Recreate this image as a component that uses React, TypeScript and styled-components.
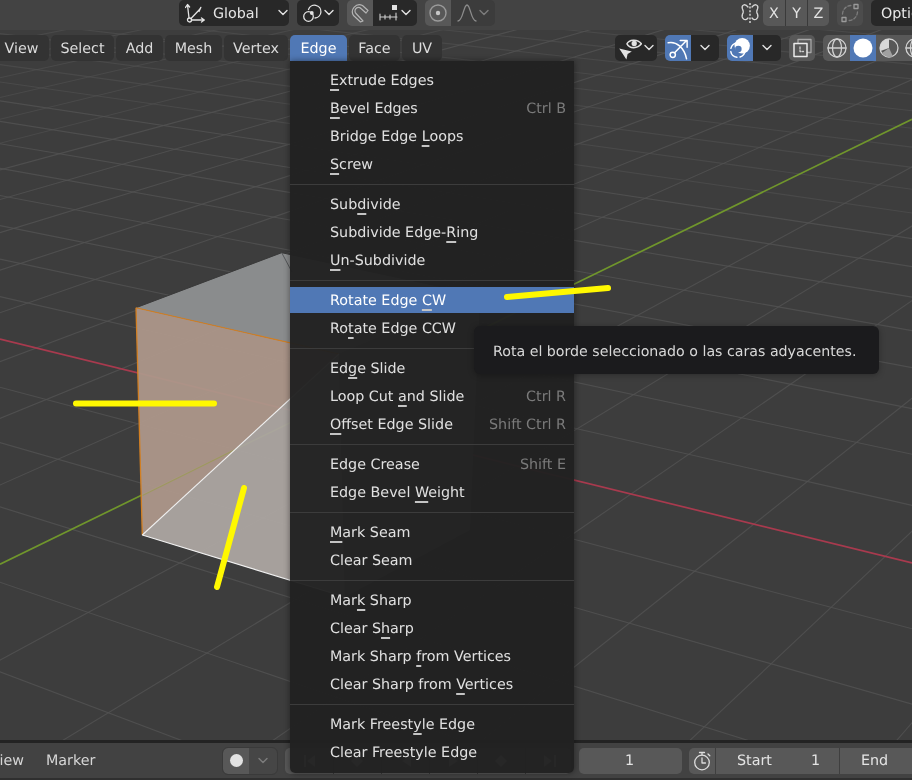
import React from 'react'
import styled, { createGlobalStyle } from 'styled-components'

const GlobalStyle = createGlobalStyle`
  html, body {
    margin: 0;
    padding: 0;
    background: #3d3d3d;
    overflow: hidden;
  }
`

// viewport perspective: two vanishing points, measured off the axes
const ORIGIN = { x: 307, y: 414.4 }
const V1 = { x: -2520, y: -280 }
const V2 = { x: 1820, y: -324 }

const redY = (x: number) => 339 + 0.2456 * x
const greenY = (x: number) => 564.3 - 0.488 * x

const alongRed = (k: number) => {
  const x = ORIGIN.x + (98.3 * k) / (1 - 0.03 * k)
  return { x, y: redY(x) }
}

const alongGreen = (m: number) => {
  const x = ORIGIN.x + (69 * m) / (1 + 0.04 * m)
  return { x, y: greenY(x) }
}

const through = (v: { x: number; y: number }, p: { x: number; y: number }) => ({
  x1: v.x,
  y1: v.y,
  x2: v.x + (p.x - v.x) * 4,
  y2: v.y + (p.y - v.y) * 4,
})

const range = (from: number, to: number) => {
  const out: number[] = []
  for (let i = from; i <= to; i++) if (i !== 0) out.push(i)
  return out
}

const Viewport3D = () => (
  <SceneSvg viewBox="0 30 912 710">
    <g stroke="#525252" strokeWidth="1.1">
      {range(-34, 9).map((k) => (
        <line key={k} {...through(V2, alongRed(k))} opacity={k < -8 ? 0.6 : 0.85} />
      ))}
      {range(-9, 30).map((m) => (
        <line key={m} {...through(V1, alongGreen(m))} opacity={m > 8 ? 0.6 : 0.85} />
      ))}
    </g>
    <line x1="0" y1={redY(0)} x2="912" y2={redY(912)} stroke="#a83a4e" strokeWidth="1.7" />
    <line x1="0" y1={greenY(0)} x2="912" y2={greenY(912)} stroke="#70962c" strokeWidth="1.7" />

    <polygon points="136,307.7 281.7,252.7 480,295 339,354" fill="#8c8e90" fillOpacity="0.97" />
    <polygon points="339,354 480,295 470,530 345,597" fill="#77787a" fillOpacity="0.97" />
    <polygon points="136,307.7 142.3,535 339,354" fill="#ad978a" fillOpacity="0.95" />
    <polygon points="142.3,535 339,354 345,597" fill="#aca5a1" fillOpacity="0.95" />
    <line x1="142.5" y1="495.5" x2="234.8" y2="449.7" stroke="#9d9860" strokeWidth="1.2" />

    <line x1="136" y1="307.7" x2="281.7" y2="252.7" stroke="#3a3a3a" strokeWidth="1" />
    <line x1="281.7" y1="252.7" x2="292" y2="272" stroke="#55575a" strokeWidth="1" />
    <line x1="281.7" y1="252.7" x2="480" y2="295" stroke="#3a3a3a" strokeWidth="1" />
    <line x1="136" y1="307.7" x2="142.3" y2="535" stroke="#d27f22" strokeWidth="1.3" />
    <line x1="136" y1="307.7" x2="339" y2="354" stroke="#d27f22" strokeWidth="1.1" />
    <line x1="142.3" y1="535" x2="339" y2="354" stroke="#f2f2f2" strokeWidth="1.1" />
    <line x1="142.3" y1="535" x2="345" y2="597" stroke="#f2f2f2" strokeWidth="1.1" />
  </SceneSvg>
)

const Chevron = ({ dim }: { dim?: boolean }) => (
  <svg width="12" height="8" viewBox="0 0 12 8" fill="none">
    <polyline
      points="2,1.5 6,5.5 10,1.5"
      stroke={dim ? '#7c7c7c' : '#e2e2e2'}
      strokeWidth="1.4"
      strokeLinecap="round"
      strokeLinejoin="round"
    />
  </svg>
)

const Icon = ({ size = 20, children }: { size?: number; children: React.ReactNode }) => (
  <svg
    width={size}
    height={size}
    viewBox="0 0 20 20"
    fill="none"
    stroke="#e2e2e2"
    strokeWidth="1.3"
    strokeLinecap="round"
    strokeLinejoin="round"
  >
    {children}
  </svg>
)

const OrientationIcon = () => (
  <Icon>
    <circle cx="4.5" cy="17" r="2" />
    <path d="M4 15 2.5 2 M0.5 4.5 2.5 1.5 4.6 4 M6.5 17H19 M16.5 15l2.8 2-2.8 2 M6 15.5 15 6" />
    <path d="M14 8.5 16 4" strokeDasharray="1.5 1.5" />
  </Icon>
)

const LinkIcon = () => (
  <Icon>
    <circle cx="6.5" cy="13.5" r="4.8" />
    <path d="M6.5 6.5a6.4 6.4 0 1 1 6.5 8.5" />
    <circle cx="9.8" cy="10" r="1.9" fill="#e2e2e2" stroke="none" />
  </Icon>
)

const MagnetIcon = () => (
  <Icon>
    <path
      d="M13 18 6 10.5a3.5 3.5 0 0 1 5-5l5 4.5 2-2.5-5.5-5A7 7 0 0 0 3.5 12.5L10.5 19Z"
      stroke="#b4b4b4"
      strokeWidth="1.2"
    />
  </Icon>
)

const SnapIncrementIcon = () => (
  <Icon>
    <rect x="13" y="2" width="5" height="5" fill="#e2e2e2" stroke="none" />
    <path d="M1 14H18 M1 11v6 M6 12v4 M11 12v4 M17 10v7" stroke="#cfcfcf" strokeWidth="1.1" />
  </Icon>
)

const ProportionalIcon = () => (
  <Icon>
    <circle cx="10" cy="10" r="8" stroke="#9a9a9a" strokeWidth="1.4" />
    <circle cx="10" cy="10" r="2.2" fill="#c6c6c6" stroke="none" />
  </Icon>
)

const FalloffIcon = () => (
  <Icon>
    <path d="M1 18C6 18 6.5 2 10 2s4 16 9 16" stroke="#8c8c8c" />
  </Icon>
)

const MirrorIcon = () => (
  <Icon>
    <path d="M8 4C5 0 1 2 2.5 6 3.5 8 4 9 2.5 11 1 15 5 19 8 15" stroke="#d6d6d6" />
    <path d="M12 4c3-4 7-2 5.5 2-1 2-1.5 3 0 5 1.5 4-2.5 8-5.5 4" stroke="#d6d6d6" />
    <path d="M10 0v20" stroke="#e8e8e8" strokeDasharray="2 1.6" strokeLinecap="butt" />
  </Icon>
)

const AutoMergeIcon = () => (
  <Icon>
    <rect x="14" y="1.5" width="4" height="4" stroke="#9a9a9a" />
    <rect x="2" y="14.5" width="4" height="4" stroke="#9a9a9a" />
    <path d="M2.5 11C3 6 6 3 11 2.5 M17.5 9C17 14 14 17 9 17.5" stroke="#7c7c7c" strokeDasharray="3 2" />
  </Icon>
)

const VisibilityIcon = () => (
  <Icon size={24}>
    <path d="M7.5 6.5C9 3 16 2 19.5 6.5 16 11 9.5 10.5 7.5 6.5Z" />
    <circle cx="13.5" cy="6.2" r="2.2" fill="#e2e2e2" stroke="none" />
    <path d="M1 10.5 11.5 13 8 15 7 19.5Z" fill="#e2e2e2" stroke="none" />
  </Icon>
)

const GizmoIcon = () => (
  <Icon size={23}>
    <circle cx="5" cy="15.5" r="2.3" stroke="#fff" />
    <path d="M6.8 13.5 17 3 M11.5 3H17.5V9 M1 5C8 3.5 15 9 17 19" stroke="#fff" />
  </Icon>
)

const OverlayIcon = () => (
  <Icon size={22}>
    <circle cx="8" cy="12" r="6.5" stroke="#fff" strokeDasharray="8 3" />
    <circle cx="12" cy="8" r="7" fill="#fff" stroke="none" />
    <circle cx="8.5" cy="11" r="3" fill="#5078b5" stroke="none" />
  </Icon>
)

const XrayIcon = () => (
  <Icon>
    <rect x="6" y="1.5" width="13" height="13" stroke="#a8a8a8" />
    <rect x="2" y="5.5" width="13" height="13" fill="#585858" stroke="#eaeaea" strokeWidth="1.5" />
    <path d="M8 9v4.5h3.5" stroke="#cfcfcf" strokeDasharray="2 1.5" />
  </Icon>
)

const WireIcon = () => (
  <Icon>
    <circle cx="10" cy="10" r="9" stroke="#d0d0d0" />
    <ellipse cx="10" cy="10" rx="4.5" ry="9" stroke="#d0d0d0" />
    <path d="M1 10H19" stroke="#d0d0d0" />
  </Icon>
)

const SolidIcon = () => (
  <Icon>
    <circle cx="10" cy="10" r="9.5" fill="#ffffff" stroke="none" />
  </Icon>
)

const MaterialIcon = () => (
  <Icon>
    <circle cx="10" cy="10" r="9" stroke="#d0d0d0" />
    <path d="M10 1a9 9 0 0 0-8.5 12L10 10Z" fill="#d8d8d8" stroke="none" />
    <path d="M3 15a9 9 0 0 0 11 3.5L10 10Z" fill="#a0a0a0" stroke="none" />
  </Icon>
)

const TimerIcon = () => (
  <Icon>
    <circle cx="10" cy="11.5" r="7.3" stroke="#dcdcdc" />
    <path d="M7.5 1.5h5 M10 2v2 M16 3l1.8 1.8 M10 7v5h3.5" stroke="#dcdcdc" />
  </Icon>
)

const PlayShape = ({ d }: { d: string }) => (
  <svg width="16" height="14" viewBox="0 0 16 14">
    <path d={d} fill="#b8b8b8" />
  </svg>
)

const PLAYBACK = [
  'M3 1h2v12H3Z M14 1v12L6 7Z',
  'M1 7l6-6 6 6-6 6Z',
  'M13 1v12L4 7Z',
  'M3 1v12l9-6Z',
  'M1 7l6-6 6 6-6 6Z',
  'M12 1h2v12h-2Z M2 1v12l8-6Z',
]

type Entry = { label: string; shortcut?: string; active?: boolean } | 'sep'

// an underscore marks the mnemonic letter
const MENU: Entry[] = [
  { label: '_Extrude Edges' },
  { label: '_Bevel Edges', shortcut: 'Ctrl B' },
  { label: 'Bridge Edge _Loops' },
  { label: '_Screw' },
  'sep',
  { label: 'Sub_divide' },
  { label: 'Subdivide Edge-_Ring' },
  { label: '_Un-Subdivide' },
  'sep',
  { label: 'Rotate Edge _CW', active: true },
  { label: 'Ro_tate Edge CCW' },
  'sep',
  { label: 'Ed_ge Slide' },
  { label: 'Loop Cut _and Slide', shortcut: 'Ctrl R' },
  { label: '_Offset Edge Slide', shortcut: 'Shift Ctrl R' },
  'sep',
  { label: 'Edge Crease', shortcut: 'Shift E' },
  { label: 'Edge Bevel _Weight' },
  'sep',
  { label: '_Mark Seam' },
  { label: 'Clear Seam' },
  'sep',
  { label: 'Mar_k Sharp' },
  { label: 'Clear S_harp' },
  { label: 'Mark Sharp _from Vertices' },
  { label: 'Clear Sharp from _Vertices' },
  'sep',
  { label: 'Mark Freest_yle Edge' },
  { label: 'Clear Freestyle Edge' },
]

const Label = ({ text }: { text: string }) => {
  const at = text.indexOf('_')
  if (at < 0) return <span>{text}</span>
  return (
    <span>
      {text.slice(0, at)}
      <Mnemonic>{text[at + 1]}</Mnemonic>
      {text.slice(at + 2)}
    </span>
  )
}

const MENU_TABS = [
  { name: 'View', w: 55 },
  { name: 'Select', w: 63 },
  { name: 'Add', w: 47 },
  { name: 'Mesh', w: 57 },
  { name: 'Vertex', w: 64 },
  { name: 'Edge', w: 57, open: true },
  { name: 'Face', w: 51 },
  { name: 'UV', w: 40 },
]

export default function App() {
  return (
    <Page>
      <GlobalStyle />
      <ToolHeader>
        <Group>
          <Btn $w={110} $pad>
            <OrientationIcon />
            <DropLabel>Global</DropLabel>
            <Chevron />
          </Btn>
        </Group>
        <Group>
          <Btn $w={42}>
            <LinkIcon />
            <Chevron />
          </Btn>
        </Group>
        <Group>
          <Btn $w={26} $tone="mid">
            <MagnetIcon />
          </Btn>
          <Btn $w={44}>
            <SnapIncrementIcon />
            <Chevron />
          </Btn>
        </Group>
        <Group>
          <Btn $w={26} $tone="mid">
            <ProportionalIcon />
          </Btn>
          <Btn $w={44} $tone="off">
            <FalloffIcon />
            <Chevron dim />
          </Btn>
        </Group>
        <MirrorSlot>
          <MirrorIcon />
        </MirrorSlot>
        <Group>
          <AxisBtn $w={22} $tone="mid">X</AxisBtn>
          <AxisBtn $w={22} $tone="mid" $divider>Y</AxisBtn>
          <AxisBtn $w={22} $tone="mid" $divider>Z</AxisBtn>
        </Group>
        <Group>
          <Btn $w={26} $tone="dim">
            <AutoMergeIcon />
          </Btn>
        </Group>
        <OptionsButton>Options</OptionsButton>
      </ToolHeader>

      <Viewport>
        <Viewport3D />
        <MenuRow>
          <Tabs>
            {MENU_TABS.map((tab) => (
              <Tab key={tab.name} $w={tab.w} $open={tab.open}>
                {tab.name}
              </Tab>
            ))}
          </Tabs>
          <ViewControls>
            <Group>
              <Btn $w={42}>
                <VisibilityIcon />
                <Chevron />
              </Btn>
            </Group>
            <Group>
              <Btn $w={26} $tone="blue">
                <GizmoIcon />
              </Btn>
              <Btn $w={28}>
                <Chevron />
              </Btn>
            </Group>
            <Group>
              <Btn $w={26} $tone="blue">
                <OverlayIcon />
              </Btn>
              <Btn $w={28}>
                <Chevron />
              </Btn>
            </Group>
            <Group>
              <Btn $w={26} $tone="mid">
                <XrayIcon />
              </Btn>
            </Group>
            <Group>
              <Btn $w={27} $tone="mid">
                <WireIcon />
              </Btn>
              <Btn $w={26} $tone="blue">
                <SolidIcon />
              </Btn>
              <Btn $w={26} $tone="mid">
                <MaterialIcon />
              </Btn>
              <Btn $w={26} $tone="mid">
                <WireIcon />
              </Btn>
            </Group>
          </ViewControls>
        </MenuRow>
      </Viewport>

      <Timeline>
        <TimelineMenus>
          <ClippedMenu>View</ClippedMenu>
          <span>Marker</span>
        </TimelineMenus>
        <RecordGroup>
          <Btn $w={26} $tone="mid">
            <RecordDot />
          </Btn>
          <Btn $w={28} $tone="plain">
            <Chevron dim />
          </Btn>
        </RecordGroup>
        <PlaybackGroup>
          {PLAYBACK.map((d, i) => (
            <Btn key={i} $w={48} $tone="mid" $divider={i > 0}>
              <PlayShape d={d} />
            </Btn>
          ))}
        </PlaybackGroup>
        <FrameField>1</FrameField>
        <RangeGroup>
          <Btn $w={26} $tone="mid">
            <TimerIcon />
          </Btn>
          <RangeField $w={124}>
            <span>Start</span>
            <span>1</span>
          </RangeField>
          <RangeField $w={100}>
            <span>End</span>
          </RangeField>
        </RangeGroup>
      </Timeline>

      <Menu>
        {MENU.map((entry, i) =>
          entry === 'sep' ? (
            <Separator key={i} />
          ) : (
            <MenuItem key={i} $active={entry.active}>
              <Label text={entry.label} />
              {entry.shortcut && <Shortcut>{entry.shortcut}</Shortcut>}
            </MenuItem>
          )
        )}
      </Menu>

      <Tooltip>Rota el borde seleccionado o las caras adyacentes.</Tooltip>

      <Annotations viewBox="0 0 912 780">
        <g stroke="#fff800" strokeWidth="6" strokeLinecap="round">
          <line x1="76" y1="403.5" x2="214" y2="403.5" />
          <line x1="244" y1="488" x2="217" y2="587" />
          <line x1="507" y1="297" x2="608" y2="288" />
        </g>
      </Annotations>
    </Page>
  )
}

const UI_FONT = `"DejaVu Sans", "Noto Sans", sans-serif`

const TONES: Record<string, string> = {
  dark: '#282828',
  mid: '#585858',
  blue: '#5078b5',
  dim: '#4c4c4c',
  off: '#3c3c3c',
  plain: '#464646',
}

// the reference is a slightly soft, upscaled capture
const Page = styled.div`
  position: relative;
  width: 912px;
  height: 780px;
  overflow: hidden;
  display: flex;
  flex-direction: column;
  font-family: ${UI_FONT};
  font-size: 14.3px;
  text-rendering: geometricPrecision;
  color: #dcdcdc;
  filter: blur(0.35px);
`

const ToolHeader = styled.div`
  height: 30px;
  flex-shrink: 0;
  display: flex;
  gap: 8px;
  align-items: flex-start;
  padding-left: 179px;
  background: #434343;
  overflow: hidden;
`

const Group = styled.div`
  display: flex;
  flex-shrink: 0;
  border-radius: 5px;
  overflow: hidden;
`

const Btn = styled.div<{ $w: number; $tone?: string; $pad?: boolean; $divider?: boolean }>`
  width: ${(p) => p.$w}px;
  height: 26px;
  flex-shrink: 0;
  box-sizing: border-box;
  display: flex;
  align-items: center;
  justify-content: ${(p) => (p.$pad ? 'flex-start' : 'center')};
  padding: ${(p) => (p.$pad ? '0 0 0 6px' : '0')};
  gap: 1px;
  background: ${(p) => TONES[p.$tone ?? 'dark']};
  border-left: ${(p) => (p.$divider ? '1px solid #3a3a3a' : 'none')};
  color: #e4e4e4;
`

const AxisBtn = styled(Btn)`
  padding-top: 2px;
`

const DropLabel = styled.span`
  margin: 2px 17px 0 7px;
  width: 46px;
`

const MirrorSlot = styled.div`
  margin-left: 234px;
  width: 26px;
  height: 26px;
  display: flex;
  align-items: center;
  justify-content: center;
  flex-shrink: 0;
  margin-right: -8px;
`

const OptionsButton = styled.div`
  flex-shrink: 0;
  width: 70px;
  height: 26px;
  padding-left: 10px;
  line-height: 28px;
  border-radius: 5px;
  background: #282828;
  color: #e8e8e8;
`

const Viewport = styled.div`
  position: relative;
  flex: 1;
  min-height: 0;
  background: #3d3d3d;
  overflow: hidden;
`

const SceneSvg = styled.svg`
  display: block;
  width: 912px;
  height: 710px;
`

const MenuRow = styled.div`
  position: absolute;
  top: 5px;
  left: 0;
  right: 0;
  display: flex;
  justify-content: space-between;
  overflow: hidden;
`

const Tabs = styled.div`
  display: flex;
  gap: 2px;
  margin-left: -6px;
`

const Tab = styled.div<{ $w: number; $open?: boolean }>`
  width: ${(p) => p.$w}px;
  height: 26px;
  line-height: 28px;
  box-sizing: border-box;
  text-align: center;
  border-radius: ${(p) => (p.$open ? '5px 5px 0 0' : '5px')};
  background: ${(p) => (p.$open ? '#5078b5' : '#333333')};
  color: ${(p) => (p.$open ? '#ffffff' : '#dcdcdc')};
`

const ViewControls = styled.div`
  display: flex;
  gap: 8px;
  margin-right: -16px;
  flex-shrink: 0;
`

const Timeline = styled.div`
  height: 40px;
  box-sizing: border-box;
  flex-shrink: 0;
  display: flex;
  align-items: center;
  border-top: 3px solid #232323;
  border-bottom: 2px solid #2f2f2f;
  background: #424242;
  overflow: hidden;
`

const TimelineMenus = styled.div`
  width: 223px;
  flex-shrink: 0;
  display: flex;
  color: #d6d6d6;
`

const ClippedMenu = styled.span`
  margin-left: -10px;
  margin-right: 22px;
`

const RecordGroup = styled(Group)`
  outline: 1px solid #3a3a3a;
`

const RecordDot = styled.div`
  width: 13px;
  height: 13px;
  border-radius: 50%;
  background: #e2e2e2;
`

const PlaybackGroup = styled(Group)`
  margin-left: 8px;
  width: 286px;
`

const FrameField = styled.div`
  margin-left: 8px;
  width: 103px;
  height: 26px;
  box-sizing: border-box;
  padding-right: 2px;
  flex-shrink: 0;
  line-height: 26px;
  text-align: center;
  border-radius: 5px;
  background: #585858;
  color: #e4e4e4;
`

const RangeGroup = styled(Group)`
  margin-left: 7px;
`

const RangeField = styled.div<{ $w: number }>`
  width: ${(p) => p.$w}px;
  height: 26px;
  box-sizing: border-box;
  flex-shrink: 0;
  display: flex;
  align-items: center;
  justify-content: space-between;
  padding: 0 19px 0 21px;
  background: #585858;
  border-left: 1px solid #3f3f3f;
  color: #e4e4e4;
`

const Menu = styled.div`
  position: absolute;
  left: 290px;
  top: 61px;
  width: 284px;
  height: 712px;
  box-sizing: border-box;
  padding: 6px 0;
  background: rgba(33, 33, 33, 0.965);
  border-radius: 0 0 5px 5px;
  box-shadow: 0 0 6px rgba(0, 0, 0, 0.45);
`

const MenuItem = styled.div<{ $active?: boolean }>`
  height: 26px;
  box-sizing: border-box;
  margin-bottom: 2px;
  padding: 2px 8px 0 40px;
  display: flex;
  align-items: center;
  justify-content: space-between;
  white-space: nowrap;
  background: ${(p) => (p.$active ? '#5078b5' : 'transparent')};
  color: ${(p) => (p.$active ? '#ffffff' : '#e0e0e0')};
`

const Mnemonic = styled.span`
  text-decoration: underline;
  text-decoration-color: #c4c4c4;
  text-decoration-thickness: 1.5px;
  text-underline-offset: 4px;
  text-decoration-skip-ink: none;
`

const Shortcut = styled.span`
  color: #7a7a7a;
`

const Separator = styled.div`
  height: 12px;
  box-sizing: border-box;
  &::before {
    content: '';
    display: block;
    position: relative;
    top: 5px;
    height: 1px;
    background: #3c3c3c;
  }
`

const Tooltip = styled.div`
  position: absolute;
  left: 474px;
  top: 326px;
  width: 405px;
  height: 48px;
  box-sizing: border-box;
  padding-left: 19px;
  line-height: 52px;
  font-size: 14.2px;
  white-space: nowrap;
  border-radius: 6px;
  background: #1b1b1d;
  color: #d8d8d8;
  box-shadow: 0 1px 6px rgba(0, 0, 0, 0.3);
`

const Annotations = styled.svg`
  position: absolute;
  left: 0;
  top: 0;
  width: 912px;
  height: 780px;
  pointer-events: none;
`
